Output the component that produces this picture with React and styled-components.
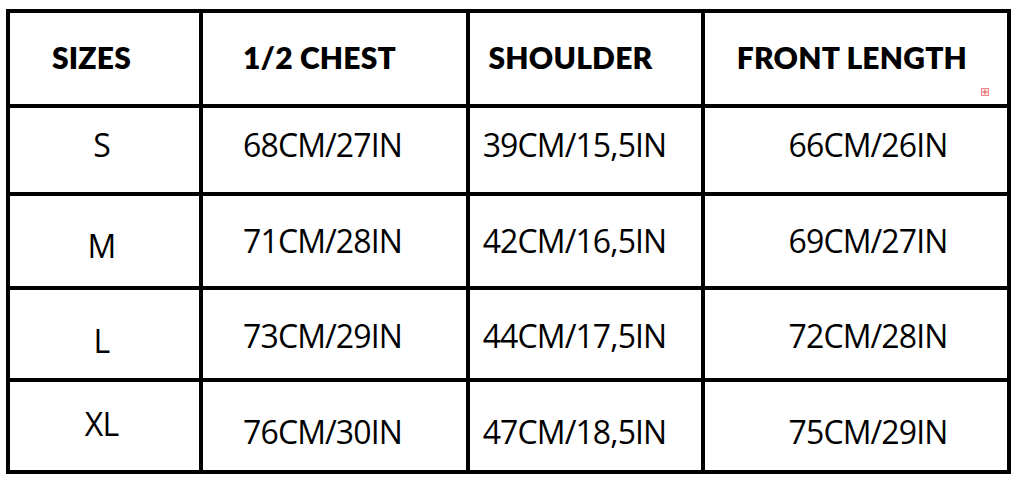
import React from 'react';
import styled, { createGlobalStyle } from 'styled-components';

const GlobalStyle = createGlobalStyle`
  html, body {
    margin: 0;
    padding: 0;
    background: #ffffff;
  }
`;

const Page = styled.div`
  padding: 9px 0 0 6px;
`;

const Chart = styled.div`
  display: grid;
  grid-template-columns: 189px 263px 231px 302px;
  grid-template-rows: 91px 84px 90px 88px 88px;
  gap: 4px;
  padding: 4px;
  width: 1005px;
  box-sizing: border-box;
  background: #000000;
`;

const HeadCell = styled.div`
  background: #ffffff;
  display: flex;
  align-items: center;
  justify-content: center;
  padding-right: ${(p) => p.$shift || 0}px;
  padding-left: ${(p) => p.$push || 0}px;
  padding-bottom: 4px;
  font-family: Lato, "Noto Sans", sans-serif;
  font-weight: 800;
  font-size: 30px;
  letter-spacing: 0.2px;
  color: #000000;
  position: relative;
`;

const Cell = styled.div`
  background: #ffffff;
  display: flex;
  align-items: center;
  justify-content: center;
  padding-right: ${(p) => p.$shift || 0}px;
  padding-left: ${(p) => p.$push || 0}px;
  padding-top: ${(p) => Math.max(p.$offset || 0, 0)}px;
  padding-bottom: ${(p) => Math.max(-(p.$offset || 0), 0)}px;
  font-family: "Open Sans", "Noto Sans", sans-serif;
  font-weight: 400;
  font-size: 32px;
  letter-spacing: -0.9px;
  color: #000000;
`;

const Marker = styled.span`
  position: absolute;
  right: 18px;
  bottom: 8px;
  width: 8px;
  height: 8px;
  box-sizing: border-box;
  border: 1px solid #f08a8a;
  background: #fde8e8;
  display: flex;
  align-items: center;
  justify-content: center;
`;

const headers = ['SIZES', '1/2 CHEST', 'SHOULDER', 'FRONT LENGTH'];
const headShift = [{ shift: 26 }, { shift: 30 }, { shift: 30 }, { shift: 8 }];
const bodyShift = [{ shift: 6 }, { shift: 24 }, { shift: 22 }, { push: 24 }];

const rows = [
  { size: 'S', sizeOffset: -12, valueOffset: -12, values: ['68CM/27IN', '39CM/15,5IN', '66CM/26IN'] },
  { size: 'M', sizeOffset: 8, valueOffset: -2, values: ['71CM/28IN', '42CM/16,5IN', '69CM/27IN'] },
  { size: 'L', sizeOffset: 12, valueOffset: 2, values: ['73CM/29IN', '44CM/17,5IN', '72CM/28IN'] },
  { size: 'XL', sizeOffset: -6, valueOffset: 10, values: ['76CM/30IN', '47CM/18,5IN', '75CM/29IN'] },
];

const MarkerIcon = () => (
  <Marker>
    <svg width="6" height="6" viewBox="0 0 6 6">
      <path d="M3 0.5v5M0.5 3h5" stroke="#e05555" strokeWidth="1" />
    </svg>
  </Marker>
);

const App = () => (
  <Page>
    <GlobalStyle />
    <Chart>
      {headers.map((h, i) => (
        <HeadCell key={h} $shift={headShift[i].shift} $push={headShift[i].push}>
          {h}
          {i === 3 && <MarkerIcon />}
        </HeadCell>
      ))}
      {rows.map((row) => (
        <React.Fragment key={row.size}>
          <Cell $shift={bodyShift[0].shift} $offset={row.sizeOffset}>
            {row.size}
          </Cell>
          {row.values.map((v, i) => (
            <Cell
              key={v}
              $shift={bodyShift[i + 1].shift}
              $push={bodyShift[i + 1].push}
              $offset={row.valueOffset}
            >
              {v}
            </Cell>
          ))}
        </React.Fragment>
      ))}
    </Chart>
  </Page>
);

export default App;
